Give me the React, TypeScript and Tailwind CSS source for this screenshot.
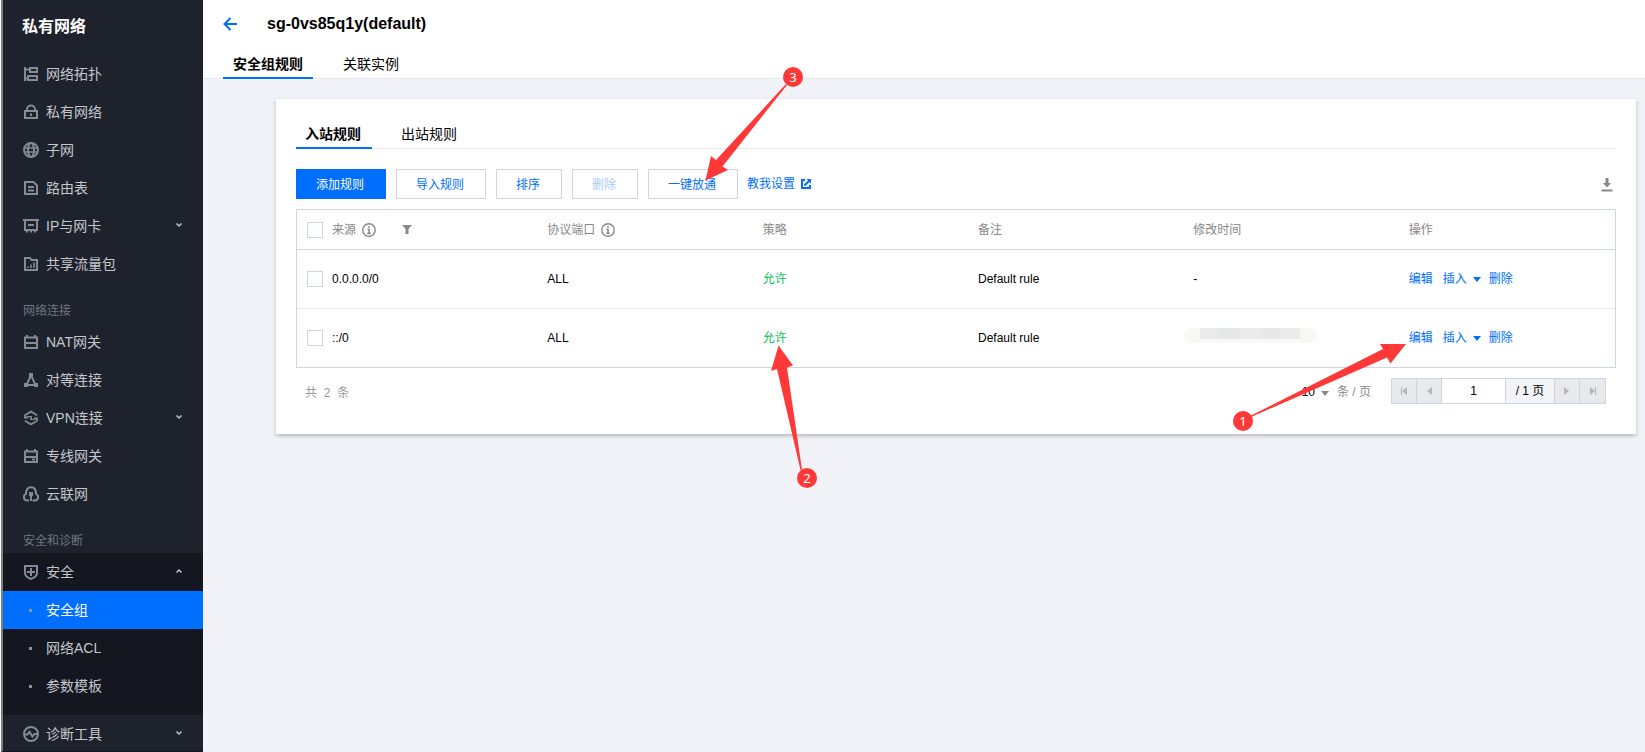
import type { ReactNode } from "react";

const PATHS: Record<string, ReactNode> = {
  topology: (
    <>
      <path d="M2 1v14M2 3.5h4M2 12.5h4" />
      <path d="M7 2h7v4H7zM5 10h9v4H5z" />
    </>
  ),
  lock: (
    <>
      <path d="M2 7h12v7H2zM4 7V5.5a4 4 0 0 1 8 0V7" />
      <path d="M8 9.5V12" />
    </>
  ),
  globe: (
    <>
      <circle cx="8" cy="8" r="7" />
      <ellipse cx="8" cy="8" rx="3" ry="7" />
      <path d="M1.5 6h13M1.5 10h13" strokeWidth="1.5" />
    </>
  ),
  doc: (
    <>
      <path d="M2 2h8.5L14 5.5V14H2z" />
      <path d="M5 7h6M5 10.5h6" />
    </>
  ),
  card: (
    <>
      <path d="M0 2h16M2 2v10h12V2" />
      <path d="M5 7h6M4 12v2.5M8 12v2.5M12 12v2.5" />
    </>
  ),
  flow: (
    <>
      <path d="M2 14V2h5l1.5 2H14v10z" />
      <path d="M5 12v-1.500M8 12V8.500M11 12V6.500" strokeWidth="1.600" />
    </>
  ),
  nat: (
    <>
      <path d="M2 3.5h12V14H2zM4 1v3M12 1v3" />
      <path d="M2 9h12" />
    </>
  ),
  peer: (
    <>
      <path d="M8 3 3.5 13h9z" />
      <path d="M6 1h4v4H6zM1 11h4v4H1zM11 11h4v4h-4z" fill="currentColor" stroke="none" />
    </>
  ),
  vpn: (
    <>
      <path d="M14 5.200 8 1.600 2 5.200v2.300h3M2 10.800l6 3.600 6-3.600V8.500h-3" strokeWidth="1.800" />
      <path d="M5 7.500V6.500h2M11 8.500v1H9" strokeWidth="1" />
      <path d="M8 6v4" strokeWidth="1.800" />
    </>
  ),
  direct: (
    <>
      <path d="M2 3.5h12V14H2zM4 1v3M12 1v3" />
      <path d="M2 9h12M9 11.5h3" />
    </>
  ),
  cloud: (
    <>
      <path d="M6 14.5H4.200A3.500 3.500 0 0 1 3 7.800C3 4 4.500 1.200 8 1.200S13 4 13 7.800a3.500 3.500 0 0 1-1.200 6.700H9.500" />
      <path d="M8 8v7" />
      <path d="M6 6h4v4H6z" fill="currentColor" stroke="none" />
    </>
  ),
  shield: (
    <>
      <path d="M2 2h12v7c0 3-2.500 4.700-6 6-3.500-1.300-6-3-6-6z" />
      <path d="M8 4v8M4 8h8" />
    </>
  ),
  pulse: (
    <>
      <circle cx="8" cy="8" r="7" />
      <path d="M2 8.500h2.500L6.500 6l3 4.500L11.500 8H14" />
    </>
  ),
};

function Icon({ name }: { name: string }) {
  return (
    <svg viewBox="0 0 16 16" className="size-4 shrink-0 text-[#838b94]" fill="none" stroke="currentColor" strokeWidth="2">
      {PATHS[name]}
    </svg>
  );
}

function Chevron({ up = false }: { up?: boolean }) {
  return (
    <svg viewBox="0 0 8 6" className="mr-5 ml-auto h-1.5 w-2 -translate-y-px" fill="none" stroke="#c0c4c9" strokeWidth="1.500">
      <path d={up ? "M1.500 4.500 4 2l2.500 2.500" : "M1.500 1.500 4 4l2.500-2.500"} />
    </svg>
  );
}

function NavItem({ icon, label, arrow }: { icon: string; label: string; arrow?: "up" | "down" }) {
  return (
    <a className="flex h-[38px] items-center pl-5 text-sm text-[#c3c7cc]">
      <Icon name={icon} />
      <span className="ml-[7px]">{label}</span>
      {arrow && <Chevron up={arrow === "up"} />}
    </a>
  );
}

function NavSection({ label }: { label: string }) {
  return <div className="h-10 pt-[19px] pl-5 text-xs leading-[18px] text-[#6f7780]">{label}</div>;
}

function SubItem({ label, active = false }: { label: string; active?: boolean }) {
  return (
    <a className={`flex h-[38px] items-center pl-[26px] text-sm ${active ? "bg-[#006eff] text-white" : "text-[#c3c7cc]"}`}>
      <span className="size-[3px] bg-[#8a9299]" />
      <span className="ml-3.5">{label}</span>
    </a>
  );
}

function Sidebar() {
  return (
    <aside className="w-[202px] shrink-0 overflow-hidden border-b border-l-2 border-b-[#14141c] border-l-[#7a8080] bg-[#1e222d]">
      <h2 className="flex h-[55px] items-center pb-0.5 pl-[19px] text-base font-bold text-white">私有网络</h2>
      <NavItem icon="topology" label="网络拓扑" />
      <NavItem icon="lock" label="私有网络" />
      <NavItem icon="globe" label="子网" />
      <NavItem icon="doc" label="路由表" />
      <NavItem icon="card" label="IP与网卡" arrow="down" />
      <NavItem icon="flow" label="共享流量包" />
      <NavSection label="网络连接" />
      <NavItem icon="nat" label="NAT网关" />
      <NavItem icon="peer" label="对等连接" />
      <NavItem icon="vpn" label="VPN连接" arrow="down" />
      <NavItem icon="direct" label="专线网关" />
      <NavItem icon="cloud" label="云联网" />
      <NavSection label="安全和诊断" />
      <div className="bg-[#141620] pb-2.5">
        <NavItem icon="shield" label="安全" arrow="up" />
        <SubItem label="安全组" active />
        <SubItem label="网络ACL" />
        <SubItem label="参数模板" />
      </div>
      <NavItem icon="pulse" label="诊断工具" arrow="down" />
    </aside>
  );
}

function Info() {
  return (
    <svg viewBox="0 0 14 14" className="ml-1.5 size-3.5" fill="none" stroke="#888">
      <circle cx="7" cy="7" r="6.200" strokeWidth="1.400" />
      <path d="M7 3v1.800M5.500 6.200H7v4M5.200 10.200h3.600" strokeWidth="1.500" />
    </svg>
  );
}

function Checkbox() {
  return <span className="size-4 border border-[#cfd5de] bg-white" />;
}

const GRID = "grid grid-cols-[26px_repeat(6,minmax(0,1fr))] items-center";

function Row({ source, time, last = false }: { source: string; time: ReactNode; last?: boolean }) {
  return (
    <div className={`${GRID} ${last ? "h-[58px]" : "h-[59px] border-b border-[#e5e8ed]"}`}>
      <span className="flex pl-2.5"><Checkbox /></span>
      <span className="pl-[9px]">{source}</span>
      <span className="pl-[9px]">ALL</span>
      <span className="pl-[9px] text-[#0abf5b]">允许</span>
      <span className="pl-[9px]">Default rule</span>
      <span className="pl-[9px]">{time}</span>
      <span className="flex items-center pl-[9px] text-[#006eff]">
        <a>编辑</a>
        <a className="ml-2.5">插入</a>
        <svg viewBox="0 0 8 5" className="mr-2 ml-1.5 h-[5px] w-2" fill="currentColor"><path d="M0 0h8L4 5z" /></svg>
        <a>删除</a>
      </span>
    </div>
  );
}

function Redacted() {
  return (
    <span className="-ml-[9px] flex h-[15px] w-[133px] -translate-y-[3px] overflow-hidden rounded-full bg-[#f8f8f7]">
      <span className="ml-4 h-[11px] w-5 bg-[#eaeaea]" />
      <span className="h-[11px] w-5 bg-[#e6e7e7]" />
      <span className="h-[11px] w-5 bg-[#ebebeb]" />
      <span className="h-[11px] w-5 bg-[#e9e8e9]" />
      <span className="h-[11px] w-5 bg-[#ebebeb]" />
    </span>
  );
}

function Button({ label, primary = false, disabled = false }: { label: string; primary?: boolean; disabled?: boolean }) {
  const tone = primary
    ? "border-[#006eff] bg-[#006eff] text-white"
    : disabled
      ? "border-[#cfd5de] bg-white text-[#a9ccfc]"
      : "border-[#cfd5de] bg-white text-[#006eff]";
  return <button className={`h-[30px] border pt-0.5 pr-[21px] pl-[19px] text-xs ${tone}`}>{label}</button>;
}

function PageButton({ d }: { d: string }) {
  return (
    <button className="flex w-[25px] items-center justify-center border-r border-[#cfd5de] bg-[#e7e9ed] last:border-r-0">
      <svg viewBox="0 0 8 8" className="size-2" fill="#b3b6ba"><path d={d} /></svg>
    </button>
  );
}

function Pager() {
  return (
    <div className="flex h-9 items-end pr-2.5 pl-[9px] text-xs">
      <span className="mb-[3px] text-[#999] [word-spacing:3.500px]">共 2 条</span>
      <span className="mb-1 ml-auto">10</span>
      <svg viewBox="0 0 8 5" className="mb-2 ml-1.5 h-[5px] w-2" fill="#888"><path d="M0 0h8L4 5z" /></svg>
      <span className="mb-1 ml-2 text-[#888]">条 / 页</span>
      <div className="ml-5 flex h-[26px] w-[215px] border border-[#cfd5de]">
        <PageButton d="M1 0h1v8H1zM7 0v8L2 4z" />
        <PageButton d="M7 0v8L2 4z" />
        <span className="flex w-16 items-center justify-center border-r border-[#cfd5de] bg-white">1</span>
        <span className="flex flex-1 items-center justify-center border-r border-[#cfd5de] bg-[#f2f4f8]">/ 1 页</span>
        <PageButton d="M1 0v8l5-4z" />
        <PageButton d="M1 0v8l5-4zM6 0h1v8H6z" />
      </div>
    </div>
  );
}

function Marker({ x, y, n, points }: { x: number; y: number; n: number; points: string }) {
  return (
    <g>
      <polygon points={points} fill="#ff3838" />
      <circle cx={x} cy={y} r="10" fill="#ff3838" />
      <text x={x} y={y + 4.5} fill="#fff" fontSize="13" textAnchor="middle" className="font-['Noto_Sans',sans-serif]">{n}</text>
    </g>
  );
}

export default function App() {
  return (
    <div className="relative flex h-[752px] w-[1645px] overflow-hidden bg-white pl-px font-['Liberation_Sans','Noto_Sans_CJK_SC',sans-serif] text-black">
      <Sidebar />
      <div className="flex min-w-0 flex-1 flex-col bg-[#f2f3f8]">
        <header className="flex h-[79px] shrink-0 flex-col justify-between border-b border-[#e5e7ec] bg-white pl-5">
          <div className="flex h-12 items-center">
            <svg viewBox="0 0 14 14" className="size-3.5" fill="none" stroke="#006eff" strokeWidth="2">
              <path d="M14 7H1.500M7.500 1l-6 6 6 6" />
            </svg>
            <h1 className="ml-[30px] text-base leading-5 font-bold">sg-0vs85q1y(default)</h1>
          </div>
          <nav className="-mb-px flex text-sm">
            <a className="h-[31px] border-b-2 border-[#006eff] px-2.5 pt-1.5 font-bold">安全组规则</a>
            <a className="ml-5 px-2.5 pt-1.5">关联实例</a>
          </nav>
        </header>
        <main className="mt-5 mr-[9px] ml-[73px] h-[335px] bg-white px-5 shadow-[0_2px_4px_rgba(54,58,80,0.32)]">
          <nav className="flex h-[50px] items-end border-b border-[#e5e7ec] text-sm">
            <a className="-mb-px h-[25px] border-b-2 border-[#006eff] pr-[11px] pl-[9px] leading-5 font-bold">入站规则</a>
            <a className="h-6 pl-[29px] leading-5">出站规则</a>
          </nav>
          <div className="mt-5 flex items-center gap-2.5">
            <Button label="添加规则" primary />
            <Button label="导入规则" />
            <Button label="排序" />
            <Button label="删除" disabled />
            <Button label="一键放通" />
            <a className="-ml-px flex items-center gap-1.5 text-xs text-[#006eff]">
              教我设置
              <svg viewBox="0 0 10 10" className="size-2.5" fill="none" stroke="currentColor" strokeWidth="2">
                <path d="M4 1H1v8h8V6M3.500 6.500l5-5" />
                <path d="M5.500 0H10v4.500z" fill="currentColor" stroke="none" />
              </svg>
            </a>
            <svg viewBox="0 0 12 14" className="mr-[3px] ml-auto h-3.5 w-3 translate-y-px" fill="#888">
              <path d="M4.500 0h3v5H10L6 9.500 2 5h2.500zM.500 11.500h11v2H.500z" />
            </svg>
          </div>
          <div className="mt-2.5 border border-[#cfd5de] text-xs">
            <div className={`${GRID} h-10 border-b border-[#cfd5de] text-[#888]`}>
              <span className="flex pl-2.5"><Checkbox /></span>
              <span className="flex items-center pl-[9px]">
                来源
                <Info />
                <svg viewBox="0 0 10 9" className="ml-[26px] h-[9px] w-2.5" fill="currentColor"><path d="M0 0h10L6.500 4v5h-3V4z" /></svg>
              </span>
              <span className="flex items-center pl-[9px]">协议端口<Info /></span>
              <span className="pl-[9px]">策略</span>
              <span className="pl-[9px]">备注</span>
              <span className="pl-[9px]">修改时间</span>
              <span className="pl-[9px]">操作</span>
            </div>
            <Row source="0.0.0.0/0" time="-" />
            <Row source="::/0" time={<Redacted />} last />
          </div>
          <Pager />
        </main>
      </div>
      <svg viewBox="0 0 1645 752" className="pointer-events-none absolute inset-0 h-[752px] w-[1645px]">
        <Marker x={1243} y={421} n={1} points="1251,415.500 1383,349 1380,344 1406,344 1390.500,363.500 1387,357.500 1251,417" />
        <Marker x={807} y={478} n={2} points="800.500,470 777,369 771,371 778.500,345.500 793,365.500 787,367.500 802,470" />
        <Marker x={793} y={77} n={3} points="786,84 716,160 711,156 705.500,180.500 728,170 722.500,166.500 787,85" />
      </svg>
    </div>
  );
}
